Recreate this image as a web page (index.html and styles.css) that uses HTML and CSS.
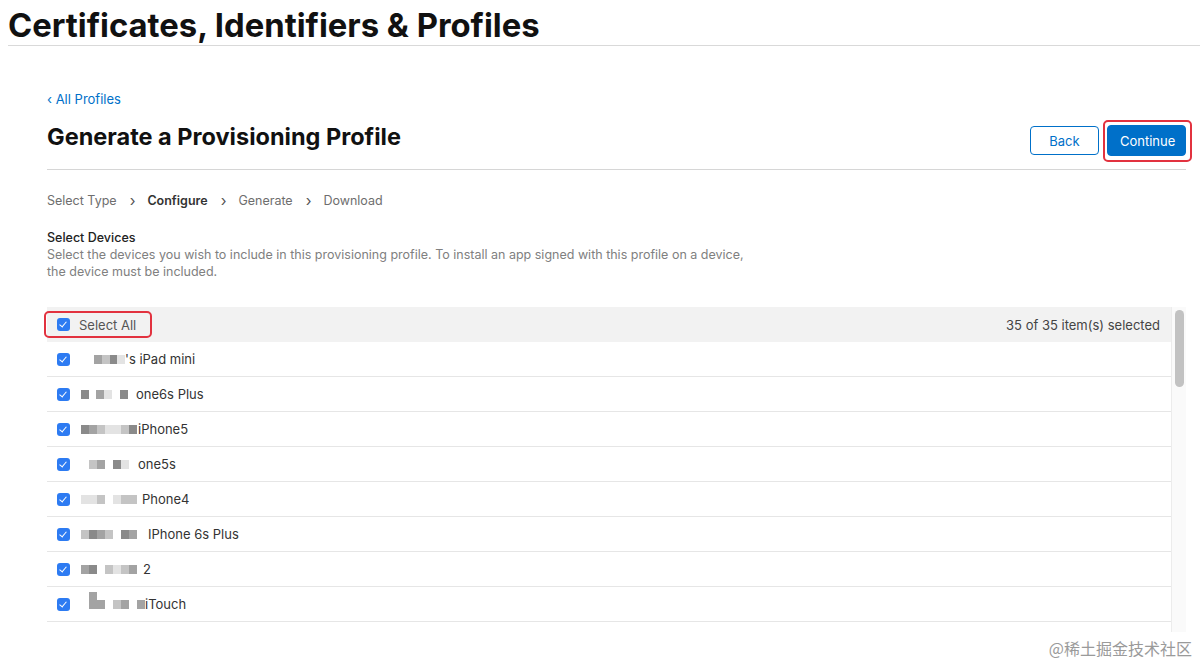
FILE: index.html
```html
<!DOCTYPE html>
<html>
<head>
<meta charset="utf-8">
<link rel="stylesheet" href="styles.css">
</head>
<body>
<header class="top">
  <h1 class="site-title">Certificates, Identifiers &amp; Profiles</h1>
</header>
<main class="main">
  <a class="back-link" href="#">‹ All Profiles</a>
  <div class="title-row">
    <h2 class="page-title">Generate a Provisioning Profile</h2>
    <div class="actions">
      <button class="btn btn-outline">Back</button>
      <button class="btn btn-primary highlighted">Continue</button>
    </div>
  </div>
  <nav class="steps">
    <span class="step">Select Type</span><span class="chev">›</span>
    <span class="step current">Configure</span><span class="chev">›</span>
    <span class="step">Generate</span><span class="chev">›</span>
    <span class="step">Download</span>
  </nav>
  <section class="intro">
    <h3 class="section-title">Select Devices</h3>
    <p class="section-desc">Select the devices you wish to include in this provisioning profile. To install an app signed with this profile on a device,<br>the device must be included.</p>
  </section>
  <div class="list-wrap">
    <div class="list">
      <div class="list-head">
        <label class="select-all"><span class="cb"></span>Select All</label>
        <span class="count">35 of 35 item(s) selected</span>
      </div>
      <div class="row"><span class="cb"></span><span class="mask" style="width:44px"><i class="px sp14"></i><i class="px g2"></i><i class="px g3"></i><i class="px g1"></i><i class="px g4"></i></span><span class="name">'s iPad mini</span></div>
      <div class="row"><span class="cb"></span><span class="mask" style="width:55px"><i class="px g1"></i><i class="px sp7"></i><i class="px g2"></i><i class="px g4"></i><i class="px sp8"></i><i class="px g1"></i></span><span class="name">one6s Plus</span></div>
      <div class="row"><span class="cb"></span><span class="mask" style="width:57px"><i class="px g1"></i><i class="px g2"></i><i class="px g3"></i><i class="px g4"></i><i class="px g4"></i><i class="px g3"></i><i class="px g1"></i></span><span class="name">iPhone5</span></div>
      <div class="row"><span class="cb"></span><span class="mask" style="width:57px"><i class="px sp8"></i><i class="px g3"></i><i class="px g2"></i><i class="px sp8"></i><i class="px g1"></i><i class="px g4"></i></span><span class="name">one5s</span></div>
      <div class="row"><span class="cb"></span><span class="mask" style="width:61px"><i class="px g4"></i><i class="px g4"></i><i class="px g3"></i><i class="px sp8"></i><i class="px g4"></i><i class="px g3"></i><i class="px g3"></i></span><span class="name">Phone4</span></div>
      <div class="row"><span class="cb"></span><span class="mask" style="width:67px"><i class="px g3"></i><i class="px g1"></i><i class="px g2"></i><i class="px g3"></i><i class="px sp8"></i><i class="px g1"></i><i class="px g2"></i></span><span class="name">IPhone 6s Plus</span></div>
      <div class="row"><span class="cb"></span><span class="mask" style="width:62px"><i class="px g2"></i><i class="px g1"></i><i class="px sp8"></i><i class="px g3"></i><i class="px g4"></i><i class="px g3"></i><i class="px g2"></i></span><span class="name">2</span></div>
      <div class="row"><span class="cb"></span><span class="mask" style="width:64px"><i class="px sp8"></i><i class="px g2 tall"></i><i class="px g2"></i><i class="px sp8"></i><i class="px g3"></i><i class="px g2"></i><i class="px sp8"></i><i class="px g2"></i></span><span class="name">iTouch</span></div>
    </div>
    <div class="scrollbar"><div class="thumb"></div></div>
  </div>
</main>
<div class="watermark">@稀土掘金技术社区</div>
</body>
</html>
```
FILE: styles.css
```css
* { box-sizing: border-box; }
html, body { margin: 0; padding: 0; background: #fff; }
body {
  width: 1200px;
  height: 666px;
  overflow: hidden;
  font-family: Inter, "Noto Sans", "Liberation Sans", sans-serif;
  color: #333;
  position: relative;
}
.top {
  margin-left: 8px;
  border-bottom: 1px solid #d9d9d9;
  height: 46px;
}
.site-title {
  margin: 0;
  font-size: 32.8px;
  line-height: 46px;
  font-weight: 700;
  color: #111;
  letter-spacing: 0;
  position: relative;
  top: 2px;
}
.main {
  padding: 0 14px 0 47px;
}
.back-link {
  display: block;
  margin-top: 44px;
  font-size: 13px;
  line-height: 18px;
  color: #0070c9;
  text-decoration: none;
}
.title-row {
  display: flex;
  justify-content: space-between;
  align-items: center;
  border-bottom: 1px solid #d6d6d6;
  height: 62px;
  padding-bottom: 4px;
}
.page-title {
  margin: 0;
  font-size: 23.5px;
  font-weight: 700;
  color: #111;
  letter-spacing: 0;
  position: relative;
  top: 0;
}
.actions {
  display: flex;
  gap: 8px;
  align-items: center;
  position: relative;
  top: 4px;
}
.btn {
  font-family: inherit;
  font-size: 13px;
  height: 30px;
  border-radius: 4px;
  padding: 0 12px;
  cursor: pointer;
}
.btn-outline {
  background: #fff;
  color: #0070c9;
  border: 1px solid #0070c9;
  width: 69px;
  height: 29px;
}
.btn-primary {
  background: #0070c9;
  color: #fff;
  border: 1px solid #0070c9;
  width: 79px;
  height: 31px;
}
.highlighted { position: relative; }
.highlighted::after {
  content: "";
  position: absolute;
  left: -5px; right: -7px; top: -6px; bottom: -7px;
  border: 2px solid #e2323f;
  border-radius: 5px;
}
.steps {
  display: flex;
  align-items: center;
  margin-top: 22px;
  font-size: 12.5px;
  line-height: 18px;
  color: #6e6e6e;
}
.chev { margin: 0 12px 0 13px; font-size: 15px; color: #555; }
.step.current { font-weight: 600; color: #333; }
.intro { margin-top: 19px; }
.section-title {
  margin: 0;
  font-size: 12.5px;
  font-weight: 500;
  line-height: 17px;
  color: #222;
}
.section-desc {
  margin: 0;
  font-size: 12.5px;
  line-height: 17px;
  color: #808080;
}
.list-wrap {
  display: flex;
  margin-top: 27px;
}
.list { flex: 1; }
.list-head {
  display: flex;
  justify-content: space-between;
  align-items: center;
  height: 35px;
  background: #f2f2f2;
  padding-right: 11px;
}
.select-all {
  display: flex;
  align-items: center;
  gap: 9px;
  margin-left: -3px;
  height: 27px;
  padding: 0 14px 0 11px;
  border: 2px solid #e2323f;
  border-radius: 5px;
  font-size: 13px;
  color: #555;
}
.count { font-size: 13px; color: #444; }
.cb {
  width: 13px;
  height: 13px;
  border-radius: 3px;
  background: #2d7bf2;
  flex: none;
  position: relative;
}
.cb::after {
  content: "";
  position: absolute;
  left: 4px; top: 2px;
  width: 3px; height: 6px;
  border: solid #fff;
  border-width: 0 1.6px 1.6px 0;
  transform: rotate(40deg);
}
.row {
  display: flex;
  align-items: center;
  height: 35px;
  border-bottom: 1px solid #e6e6e6;
  padding-left: 10px;
  font-size: 13px;
  color: #333;
}
.mask {
  display: flex;
  align-items: center;
  margin-left: 11px;
  height: 20px;
  flex: none;
}
.px {
  display: inline-block;
  width: 8px;
  height: 9px;
}
.g1 { background: #8a8a8a; }
.g2 { background: #a3a3a3; }
.g3 { background: #c4c4c4; }
.g4 { background: #e3e3e3; }
.tall { height: 17px; margin-top: -8px; }
.sp7 { width: 7px; }
.sp8 { width: 8px; }
.sp14 { width: 14px; }
.name { white-space: nowrap; }
.scrollbar {
  width: 15px;
  height: 325px;
  background: #fafafa;
  border-left: 1px solid #ececec;
  padding: 3px 2px 0 3px;
}
.thumb {
  width: 9px;
  height: 77px;
  border-radius: 5px;
  background: #c2c2c2;
}
.watermark {
  position: absolute;
  right: 8px;
  bottom: 6px;
  font-family: "Noto Sans CJK SC", sans-serif;
  font-size: 16px;
  color: #9a9a9a;
}
```
